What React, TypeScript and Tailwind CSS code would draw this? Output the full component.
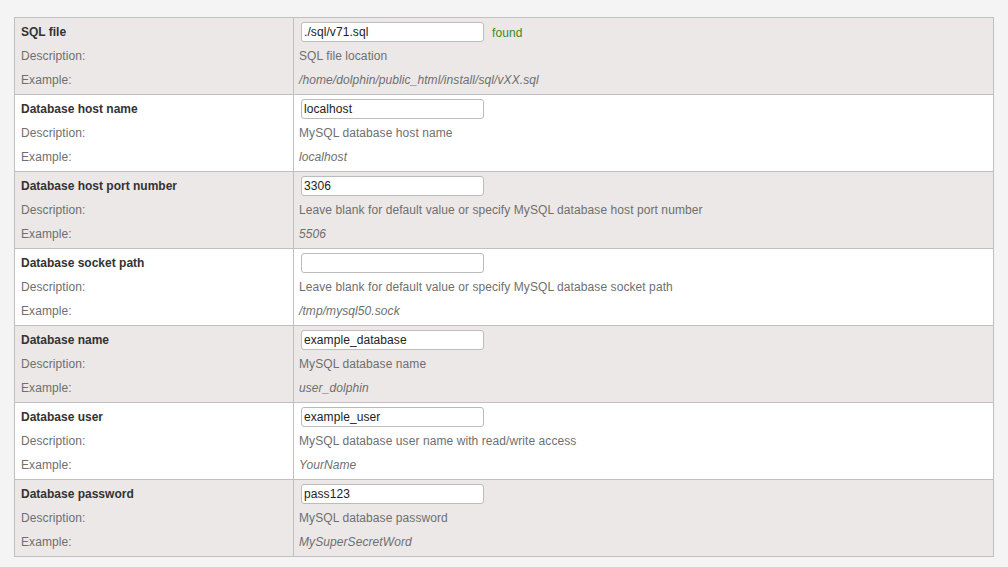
const rows = [
  {
    title: "SQL file",
    value: "./sql/v71.sql",
    found: true,
    desc: "SQL file location",
    example: "/home/dolphin/public_html/install/sql/vXX.sql",
  },
  {
    title: "Database host name",
    value: "localhost",
    desc: "MySQL database host name",
    example: "localhost",
  },
  {
    title: "Database host port number",
    value: "3306",
    desc: "Leave blank for default value or specify MySQL database host port number",
    example: "5506",
  },
  {
    title: "Database socket path",
    value: "",
    desc: "Leave blank for default value or specify MySQL database socket path",
    example: "/tmp/mysql50.sock",
  },
  {
    title: "Database name",
    value: "example_database",
    desc: "MySQL database name",
    example: "user_dolphin",
  },
  {
    title: "Database user",
    value: "example_user",
    desc: "MySQL database user name with read/write access",
    example: "YourName",
  },
  {
    title: "Database password",
    value: "pass123",
    desc: "MySQL database password",
    example: "MySuperSecretWord",
  },
];

export default function App() {
  return (
    <main className="min-h-[567px] w-[1008px] bg-[#f4f4f4] pt-[17px] pl-[14px] font-['Liberation_Sans',Arial,sans-serif] text-[12px]">
      <div className="w-[980px] border border-[#c0c0c0]">
        {rows.map((r, i) => (
          <div
            key={r.title}
            className={`flex ${i > 0 ? "border-t border-[#c0c0c0]" : ""} ${
              i % 2 === 0 ? "bg-[#ebe8e7]" : "bg-white"
            }`}
          >
            <div className="w-[279px] shrink-0 border-r border-[#c0c0c0] pl-[6px] pt-[4px] pb-[2px]">
              <div className="flex h-[22px] items-center pb-[3px] font-bold text-[#333]">
                {r.title}
              </div>
              <div className="flex h-[24px] items-center text-[#6f6f6f] tracking-[0.08px]">
                Description:
              </div>
              <div className="flex h-[24px] items-center text-[#6f6f6f] tracking-[0.08px]">
                Example:
              </div>
            </div>
            <div className="flex-1 pl-[5px] pt-[4px] pb-[2px] tracking-[0.08px]">
              <div className="flex h-[22px] items-start">
                <input
                  readOnly
                  value={r.value}
                  className="ml-[2px] h-[20px] w-[183px] rounded-[3px] border border-[#bcbcbc] bg-white px-[2px] text-[12px] tracking-[0.08px] text-[#222] outline-none"
                />
                {r.found && (
                  <span className="ml-[8px] mt-[2px] text-[#3a8a24]">found</span>
                )}
              </div>
              <div className="flex h-[24px] items-center text-[#6f6f6f]">
                {r.desc}
              </div>
              <div className="flex h-[24px] items-center italic text-[#6f6f6f]">
                {r.example}
              </div>
            </div>
          </div>
        ))}
      </div>
    </main>
  );
}
